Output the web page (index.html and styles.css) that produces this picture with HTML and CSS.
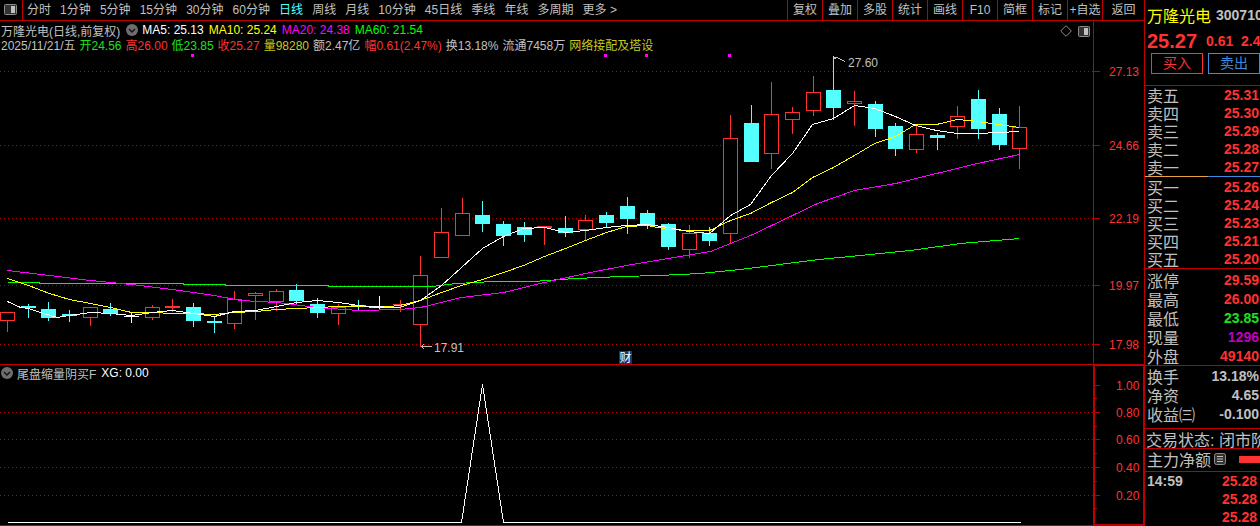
FILE: index.html
```html
<!DOCTYPE html>
<html>
<head>
  <meta charset="UTF-8" />
  <title>万隆光电 日线</title>
  <link rel="stylesheet" href="styles.css">
</head>
<body>
  <div class="main">
    <div class="toolbar">
      <div class="toggle-box">
        <svg class="toggle-icon" width="13" height="11" viewBox="0 0 13 11"><rect x="0.5" y="0.5" width="12" height="10" rx="1" fill="#333" stroke="#8c8c8c"/><rect x="7" y="2" width="4" height="7" fill="#c0c0c0"/></svg>
      </div>
      <ul class="periods">
        <li>分时</li><li>1分钟</li><li>5分钟</li><li>15分钟</li><li>30分钟</li><li>60分钟</li>
        <li class="active">日线</li><li>周线</li><li>月线</li><li>10分钟</li><li>45日线</li><li>季线</li><li>年线</li><li>多周期</li><li>更多 &gt;</li>
      </ul>
      <ul class="tools">
        <li>复权</li><li>叠加</li><li>多股</li><li>统计</li><li>画线</li><li>F10</li><li>简框</li><li>标记</li><li>+自选</li><li class="back">返回</li>
      </ul>
    </div>

    <section class="pane pane-k">
      <svg class="chart" id="k-chart"></svg>
      <div class="legend">
        <span class="grey">万隆光电(日线,前复权)</span>
        <svg class="fold-icon" width="12" height="12" viewBox="0 0 12 12"><circle cx="6" cy="6" r="6" fill="#6e6e6e"/><path d="M3 5l3 3 3-3" fill="none" stroke="#111" stroke-width="1.4"/></svg>
        <span class="ma white">MA5: 25.13</span>
        <span class="ma yellow">MA10: 25.24</span>
        <span class="ma magenta">MA20: 24.38</span>
        <span class="ma green-pure">MA60: 21.54</span>
      </div>
      <div class="legend legend-info">
        <span class="grey">2025/11/21/五</span>
        <span class="green">开24.56</span>
        <span class="red">高26.00</span>
        <span class="green">低23.85</span>
        <span class="red">收25.27</span>
        <span class="olive">量98280</span>
        <span class="grey">额2.47亿</span>
        <span class="red">幅0.61(2.47%)</span>
        <span class="grey">换13.18%</span>
        <span class="grey">流通7458万</span>
        <span class="olive">网络接配及塔设</span>
      </div>
      <div class="pane-icons">
        <svg width="12" height="12" viewBox="0 0 12 12"><path d="M6 .7L11.3 6 6 11.3.7 6z" fill="none" stroke="#8c8c8c"/></svg>
        <svg width="12" height="11" viewBox="0 0 12 11"><rect x="0.5" y="0.5" width="11" height="10" rx="1" fill="#333" stroke="#8c8c8c"/><rect x="6" y="2" width="4" height="7" fill="#c0c0c0"/></svg>
      </div>
    </section>

    <section class="pane pane-xg">
      <svg class="chart" id="xg-chart"></svg>
      <div class="legend">
        <svg class="xg-icon" width="12" height="12" viewBox="0 0 12 12"><circle cx="6" cy="6" r="6" fill="#6e6e6e"/><path d="M3 5l3 3 3-3" fill="none" stroke="#111" stroke-width="1.4"/></svg>
        <span class="grey">尾盘缩量阴买F</span>
        <span class="white xg-value">XG: 0.00</span>
      </div>
    </section>
  </div>

  <aside class="quote">
    <div class="quote-head">
      <div class="stock-name"><span class="name">万隆光电</span><span class="code">300710</span></div>
      <div class="stock-price"><span class="price">25.27</span><span class="change">0.61</span><span class="percent">2.47%</span></div>
      <div class="trade-btns"><span class="btn-buy">买入</span><span class="btn-sell">卖出</span></div>
    </div>

    <div class="rows sell">
      <div class="row"><span>卖五</span><b class="red">25.31</b></div>
      <div class="row"><span>卖四</span><b class="red">25.30</b></div>
      <div class="row"><span>卖三</span><b class="red">25.29</b></div>
      <div class="row"><span>卖二</span><b class="red">25.28</b></div>
      <div class="row"><span>卖一</span><b class="red">25.27</b></div>
    </div>
    <div class="rows buy">
      <div class="row"><span>买一</span><b class="red">25.26</b></div>
      <div class="row"><span>买二</span><b class="red">25.24</b></div>
      <div class="row"><span>买三</span><b class="red">25.23</b></div>
      <div class="row"><span>买四</span><b class="red">25.21</b></div>
      <div class="row"><span>买五</span><b class="red">25.20</b></div>
    </div>
    <div class="rows stats">
      <div class="row"><span>涨停</span><b class="red">29.59</b></div>
      <div class="row"><span>最高</span><b class="red">26.00</b></div>
      <div class="row"><span>最低</span><b class="green">23.85</b></div>
      <div class="row"><span>现量</span><b class="purple">1296</b></div>
      <div class="row"><span>外盘</span><b class="red">49140</b></div>
    </div>
    <div class="rows finance">
      <div class="row"><span>换手</span><b>13.18%</b></div>
      <div class="row"><span>净资</span><b>4.65</b></div>
      <div class="row"><span>收益㈢</span><b>-0.100</b></div>
    </div>
    <div class="status">交易状态: 闭市阶段</div>
    <div class="fund">
      <span>主力净额</span>
      <svg class="fund-icon" width="12" height="12" viewBox="0 0 12 12"><rect x="0.5" y="0.5" width="11" height="11" rx="2" fill="#333" stroke="#8c8c8c"/><path d="M3 3.500h6M3 6h6M3 8.500h6" stroke="#c0c0c0"/></svg>
      <i class="fund-bar"></i>
    </div>
    <div class="ticks">
      <div class="tick"><b>14:59</b><b class="red">25.28</b></div>
      <div class="tick"><b></b><b class="red">25.28</b></div>
      <div class="tick"><b></b><b class="red">25.28</b></div>
    </div>
  </aside>
  <script src="chart.js"></script>
</body>
</html>
```

FILE: styles.css
```css
* {
  margin: 0;
  padding: 0;
  box-sizing: border-box;
}
html, body {
  width: 1260px;
  height: 526px;
  overflow: hidden;
}
body {
  display: flex;
  background: #000;
  color: #c0c0c0;
  font-family: "Liberation Sans", "Noto Sans CJK SC", sans-serif;
  font-size: 12px;
}
ul {
  list-style: none;
}
.grey { color: #c0c0c0; }
.white { color: #fff; }
.yellow { color: #ffff00; }
.olive { color: #c8c81e; }
.magenta { color: #ff00ff; }
.purple { color: #c000c0; }
.green { color: #1fe01f; }
.green-pure { color: #00ff00; }
.red { color: #ff3232; }

/* left side: toolbar and two chart panes */
.main {
  width: 1144px;
  display: flex;
  flex-direction: column;
}
.toolbar {
  height: 21px;
  display: flex;
  border-bottom: 1px solid #c00000;
  line-height: 20px;
  font-size: 12px;
}
.toggle-box {
  width: 23px;
  padding: 4px 0 0 4px;
  border-right: 1px solid #c00000;
}
.toggle-icon {
  display: block;
}
.periods {
  display: flex;
  gap: 9.1px;
  padding-left: 4px;
  flex: 1;
}
.periods .active {
  color: #54ffff;
}
.tools {
  display: flex;
  border-left: 1px solid #c00000;
}
.tools li {
  width: 35px;
  text-align: center;
  border-right: 1px solid #c00000;
}
.tools .back {
  width: 41px;
  border-right: 0;
}

.pane {
  position: relative;
}
.pane-k {
  height: 344px;
  border-bottom: 1px solid #c00000;
}
.pane-xg {
  height: 161px;
}
.chart {
  position: absolute;
  left: 0;
  top: 0;
  width: 1144px;
  height: 100%;
}
.legend {
  position: relative;
  display: flex;
  align-items: center;
  height: 14px;
  margin-top: 2px;
  padding-left: 1px;
  white-space: nowrap;
}
.legend-info {
  margin-top: 0;
  gap: 4px;
}
.fold-icon {
  margin: 0 4px 0 6px;
}
.ma {
  margin-right: 5px;
}
.pane-icons {
  position: absolute;
  right: 54px;
  top: 4px;
  display: flex;
  gap: 6px;
  align-items: center;
}
.pane-xg .legend {
  margin-top: 1px;
}
.xg-icon {
  margin-right: 4px;
}
.xg-value {
  margin-left: 5px;
}

/* right side: quote panel */
.quote {
  width: 116px;
  height: 526px;
  overflow: hidden;
  border-left: 1px solid #c00000;
  font-size: 16px;
}
.quote-head {
  height: 86px;
  padding: 5px 0 0 2px;
  border-bottom: 1px solid #c00000;
}
.stock-name {
  display: flex;
  align-items: center;
  height: 20px;
  white-space: nowrap;
}
.name {
  flex: none;
  color: #ffff00;
  width: 69px;
  font-size: 16px;
}
.code {
  flex: none;
  font-size: 14px;
  font-weight: bold;
}
.stock-price {
  display: flex;
  align-items: center;
  height: 20px;
  margin-top: 6px;
  color: #ff3232;
  font-weight: bold;
  font-size: 14px;
  white-space: nowrap;
}
.price {
  flex: none;
  width: 59px;
  font-size: 20px;
}
.change {
  flex: none;
  width: 35px;
}
.percent {
  flex: none;
}
.trade-btns {
  display: flex;
  gap: 5px;
  margin: 2px 0 0 4px;
  font-size: 14px;
}
.btn-buy, .btn-sell {
  width: 52px;
  flex: none;
  height: 21px;
  line-height: 18px;
  text-align: center;
  border: 1px solid #ff3232;
  color: #ff3232;
}
.btn-sell {
  border-color: #3d8adf;
  color: #3d8adf;
}

.rows {
  padding: 0 1px 0 2px;
}
.row {
  display: flex;
  justify-content: space-between;
  align-items: center;
  height: 18px;
  white-space: nowrap;
}
.row b {
  font-size: 14px;
}
.sell {
  height: 91px;
  border-bottom: 1px solid;
  border-image: linear-gradient(to right, #e8a33d 55%, #3d8adf 55%) 1;
}
.buy {
  height: 92px;
  padding-top: 1px;
  border-bottom: 1px solid #c00000;
}
.stats {
  height: 97px;
  padding-top: 1px;
  border-bottom: 1px solid #c00000;
}
.stats .row, .finance .row {
  height: 19px;
}
.finance {
  height: 63px;
  border-bottom: 1px solid #c00000;
}
.status {
  height: 20px;
  line-height: 23px;
  padding-left: 1px;
  white-space: nowrap;
  overflow: hidden;
  border-bottom: 1px solid #c00000;
}
.fund {
  display: flex;
  align-items: center;
  height: 23px;
  padding: 0 0 2px 2px;
  white-space: nowrap;
  border-bottom: 1px solid #c00000;
}
.fund-icon {
  margin-left: 3px;
  flex: none;
}
.fund-bar {
  flex: none;
  width: 21px;
  height: 7px;
  margin-left: 13px;
  background: #ff3232;
}
.ticks {
  padding: 0 3px 0 2px;
}
.tick {
  display: flex;
  justify-content: space-between;
  align-items: center;
  height: 18px;
  font-size: 14px;
}
```

FILE: chart.js
```js
// [high, bodyTop, bodyBottom, low, kind] in screen pixels; r = hollow red, f = solid red, c = cyan, w = white
let candles = [
  [312, 312, 321, 332, 'r'], [304, 306, 308, 318, 'c'], [302, 309, 318, 321, 'c'], [310, 314, 316, 322, 'c'],
  [307, 307, 318, 326, 'r'], [303, 309, 314, 316, 'c'], [312, 316, 317, 323, 'w'], [305, 307, 318, 320, 'r'],
  [299, 306, 308, 312, 'f'], [303, 307, 321, 327, 'c'], [317, 321, 323, 333, 'c'], [291, 299, 324, 329, 'r'],
  [292, 293, 296, 320, 'r'], [289, 291, 302, 311, 'r'], [284, 290, 301, 305, 'c'], [298, 304, 313, 318, 'c'],
  [304, 307, 314, 325, 'r'], [300, 305, 306, 310, 'c'], [296, 306, 307, 309, 'w'], [300, 304, 305, 312, 'f'],
  [256, 275, 325, 347, 'r'], [208, 232, 258, 258, 'r'], [198, 213, 236, 236, 'r'], [201, 215, 224, 232, 'c'],
  [221, 224, 236, 246, 'c'], [222, 227, 235, 242, 'c'], [226, 226, 228, 245, 'f'], [216, 228, 233, 237, 'c'],
  [215, 220, 230, 240, 'r'], [212, 215, 223, 227, 'c'], [197, 206, 219, 234, 'c'], [210, 213, 226, 229, 'c'],
  [223, 224, 247, 250, 'c'], [225, 233, 250, 258, 'r'], [227, 233, 241, 246, 'c'], [115, 138, 234, 243, 'r'],
  [105, 123, 162, 162, 'c'], [82, 114, 154, 169, 'r'], [107, 112, 120, 134, 'r'], [76, 92, 111, 116, 'r'],
  [56, 90, 108, 120, 'c'], [91, 101, 104, 126, 'r'], [101, 104, 129, 137, 'c'], [123, 126, 149, 156, 'c'],
  [124, 134, 150, 153, 'r'], [133, 135, 138, 150, 'c'], [106, 116, 127, 139, 'r'], [90, 99, 129, 139, 'c'],
  [108, 114, 145, 150, 'c'], [106, 127, 149, 169, 'r']
];

let ma5 = '7,301 20,307 28,308 43,313 57,317 69,315 90,312 110,313 131,315 152,312 172,310 193,313 214,316 234,311 255,310 276,306 296,302 317,300 338,302 358,305 379,307 399,307 420,300 441,285 461,267 482,248 503,236 523,228 544,227 565,232 585,230 606,227 626,225 647,224 668,227 688,231 709,233 730,215 750,204 771,175 792,153 812,124 833,118 854,105 874,108 895,116 915,125 936,130 957,133 977,133 998,132 1019,131';
let ma10 = '7,278 28,285 49,293 69,299 90,303 110,307 131,312 152,312 172,313 193,313 214,314 234,312 255,311 276,309 296,308 317,307 338,306 358,306 379,307 399,305 420,300 441,292 461,285 482,279 503,272 523,265 544,256 565,248 585,240 606,232 626,226 647,225 668,229 688,230 709,230 730,220 750,213 771,202 792,192 812,177 833,167 854,155 874,143 895,136 915,124 936,124 957,119 977,121 998,124 1019,127';
let ma20 = '7,270 49,275 90,280 131,284 172,289 214,295 240,300 276,302 317,307 358,310 399,309 420,307 461,297 503,292 544,282 585,273 626,265 668,258 710,251 750,235 792,215 817,203 854,190 895,183 936,173 977,163 1019,154';
let ma60 = '7,282 39,282 39,283 133,283 183,283 183,284 225,284 225,285 328,285 328,286 431,286 456,283 493,281 533,281 575,278 621,276 658,275 700,273 740,269 818,259 860,255 910,250 960,243 1019,238';

let gridRed = '#c00000';
let candleRed = '#ff3232';
let svgNS = 'http://www.w3.org/2000/svg';

function add(svg, tag, attrs, text) {
  let el = document.createElementNS(svgNS, tag);
  for (let key in attrs) el.setAttribute(key, attrs[key]);
  if (text) el.textContent = text;
  svg.appendChild(el);
  return el;
}

function line(svg, x1, y1, x2, y2, color, extra) {
  return add(svg, 'line', Object.assign({ x1: x1, y1: y1, x2: x2, y2: y2, stroke: color }, extra || {}));
}

function setupSvg(svg, top, height) {
  svg.setAttribute('viewBox', `0 ${top} 1144 ${height}`);
  svg.setAttribute('shape-rendering', 'crispEdges');
}

// polyline on pixel centres so flat runs stay one solid pixel row
function trace(svg, points, color) {
  add(svg, 'polyline', { points: points, fill: 'none', stroke: color, transform: 'translate(0.5 0.5)' });
}

// labels: [text, y, hasGridLine]
function axis(svg, labels, labelX) {
  labels.forEach(item => {
    if (item[2] !== false) line(svg, 0, item[1] + 0.5, 1093, item[1] + 0.5, gridRed, { 'stroke-dasharray': '1 3' });
    line(svg, 1093, item[1] + 0.5, 1100, item[1] + 0.5, gridRed);
    add(svg, 'text', { x: labelX, y: item[1] + 5, fill: candleRed, 'font-size': 12 }, item[0]);
  });
}

function drawCandle(svg, candle, i) {
  let x = Math.round(7 + i * 20.66);
  let [high, top, bottom, low, kind] = candle;
  let cx = x + 0.5;
  if (kind === 'r') {
    line(svg, cx, high, cx, top, candleRed);
    line(svg, cx, bottom, cx, low, candleRed);
    add(svg, 'rect', { x: x - 7 + 0.5, y: top + 0.5, width: 14, height: bottom - top - 1, fill: '#000', stroke: candleRed });
  } else {
    let color = kind === 'c' ? '#54ffff' : kind === 'f' ? candleRed : '#fff';
    line(svg, cx, high, cx, low, color);
    add(svg, 'rect', { x: x - 7, y: top, width: 15, height: Math.max(bottom - top, 1), fill: color });
  }
}

function drawKChart() {
  let svg = document.getElementById('k-chart');
  setupSvg(svg, 21, 343);
  line(svg, 1093.5, 21, 1093.5, 364, gridRed);
  axis(svg, [['27.13', 71], ['24.66', 145], ['22.19', 218], ['19.97', 285], ['17.98', 344]], 1109);

  [192, 605, 646, 729].forEach(x => add(svg, 'rect', { x: x - 1, y: 54, width: 3, height: 3, fill: '#ff00ff' }));

  candles.forEach((candle, i) => drawCandle(svg, candle, i));

  trace(svg, ma60, '#00ff00');
  trace(svg, ma20, '#ff00ff');
  trace(svg, ma10, '#ffff00');
  trace(svg, ma5, '#ffffff');

  // high and low markers
  add(svg, 'path', { d: 'M833.5 57.5h3M833.5 59.5l3-2 9 4', fill: 'none', stroke: '#c0c0c0' });
  add(svg, 'text', { x: 848, y: 67, fill: '#c0c0c0', 'font-size': 12 }, '27.60');
  add(svg, 'path', { d: 'M421 346.5h11M421 346.5l3-2M421 346.5l3 2', fill: 'none', stroke: '#c0c0c0' });
  add(svg, 'text', { x: 434, y: 352, fill: '#c0c0c0', 'font-size': 12 }, '17.91');

  add(svg, 'rect', { x: 619, y: 351, width: 13, height: 13, fill: '#0e3a6e' });
  add(svg, 'text', { x: 619.5, y: 362, fill: '#fff', 'font-size': 12 }, '财');
}

function drawXgChart() {
  let svg = document.getElementById('xg-chart');
  setupSvg(svg, 365, 161);
  axis(svg, [['1.00', 385, false], ['0.80', 412], ['0.60', 439], ['0.40', 467], ['0.20', 495]], 1116);
  trace(svg, '7,522 461,522 482,384 503,522 1020,522', '#fff');
  line(svg, 0, 525.5, 1144, 525.5, gridRed);
  // the axis box has a heavier border than the main pane
  add(svg, 'rect', { x: 1094, y: 365, width: 50, height: 160, fill: 'none', stroke: gridRed, 'stroke-width': 2 });
  [398, 426, 453, 481, 508].forEach(y => line(svg, 1095, y + 0.5, 1097, y + 0.5, gridRed));
}

drawKChart();
drawXgChart();
```
